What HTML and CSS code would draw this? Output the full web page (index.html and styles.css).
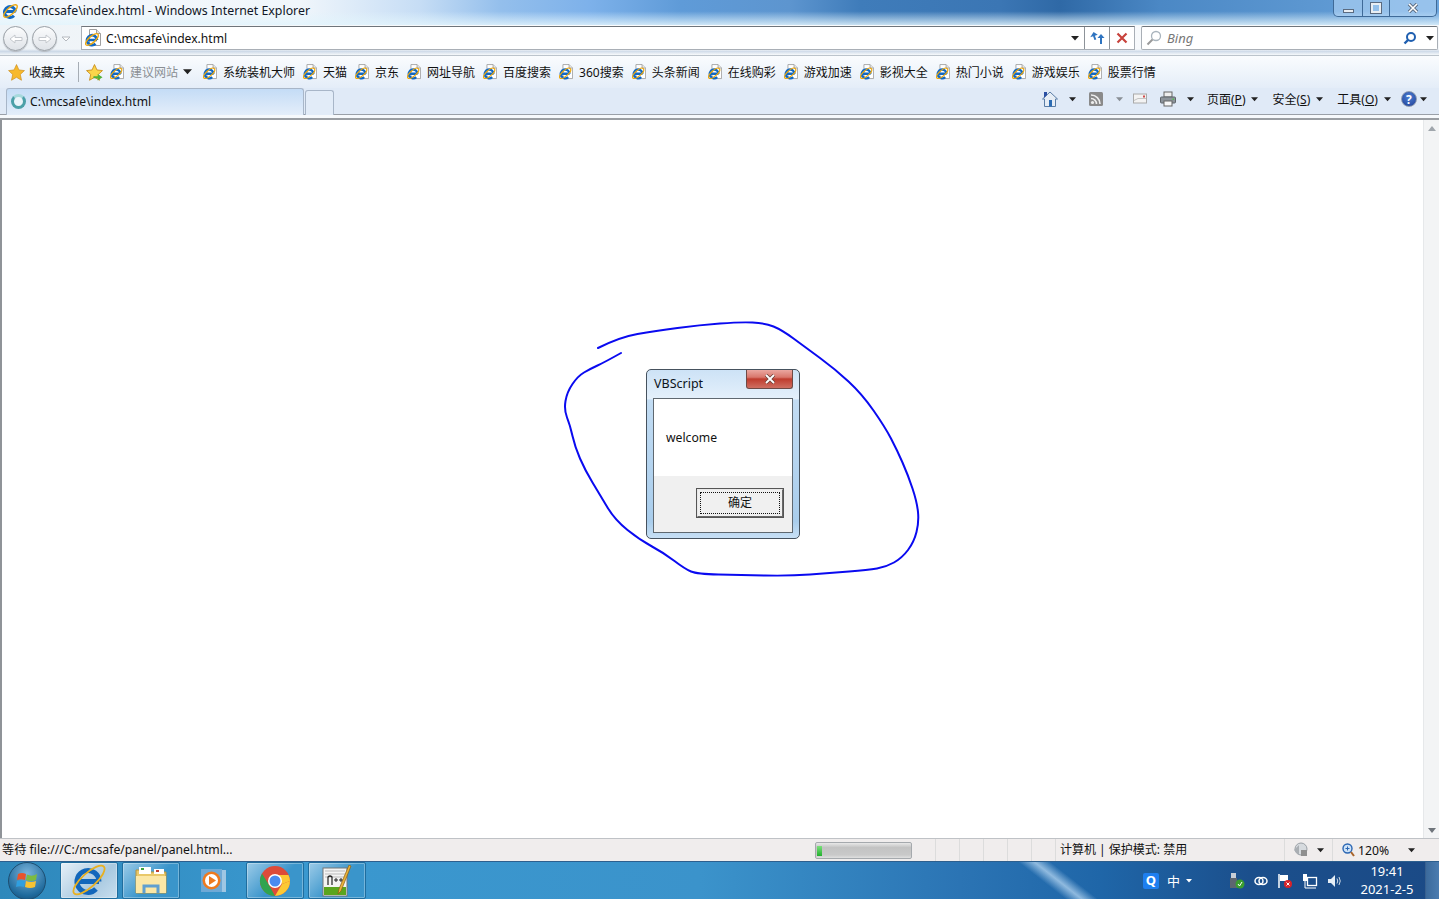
FILE: index.html
```html
<!DOCTYPE html>
<html lang="zh-CN">
<head>
    <meta charset="UTF-8">
    <title>C:\mcsafe\index.html - Windows Internet Explorer</title>
    <link rel="stylesheet" href="styles.css">
</head>
<body>
    <svg class="defs" width="0" height="0">
        <symbol id="ie-page" viewBox="0 0 16 18">
            <path d="M4.500 .5H11.500L15.500 4.500V16.500H4.500Z" fill="#fff" stroke="#a0a0a0"/>
            <path d="M11.500 .5V4.500H15.500" fill="#e4e4e4" stroke="#a0a0a0"/>
            <path d="M2.500 11H12M12 11A5 5 0 1 0 10.500 14.800" fill="none" stroke="#1068c4" stroke-width="2.700"/>
            <ellipse cx="7" cy="10.500" rx="8" ry="3.200" transform="rotate(-42 7 10.500)" fill="none" stroke="#eda80f" stroke-width="1.400"/>
        </symbol>
        <symbol id="arrow" viewBox="0 0 8 5">
            <path d="M0 0H8L4 4.500Z" fill="#222"/>
        </symbol>
    </svg>

    <div class="chrome">
        <div class="title-row">
            <svg class="title-icon" viewBox="0 0 16 16"><path d="M1.500 8.500H12.500M12.500 8.500A5.500 5.500 0 1 0 11 12.800" fill="none" stroke="#1068c4" stroke-width="3"/><ellipse cx="7.500" cy="8" rx="8.500" ry="3.400" transform="rotate(-42 7.500 8)" fill="none" stroke="#eda80f" stroke-width="1.400"/></svg>
            <span class="title-text">C:\mcsafe\index.html - Windows Internet Explorer</span>
            <div class="win-btns">
                <div class="win-btn min"><span class="min-bar"></span></div>
                <div class="win-btn max"><span class="max-box"></span></div>
                <div class="win-btn close"><svg width="12" height="10" viewBox="0 0 12 10"><path d="M2 1L10 9M10 1L2 9" stroke="#5b6b80" stroke-width="3.400"/><path d="M2 1L10 9M10 1L2 9" stroke="#fff" stroke-width="1.600"/></svg></div>
            </div>
        </div>
        <div class="nav-row">
            <div class="nav-circle"><svg width="14" height="10" viewBox="0 0 14 10"><path d="M1 5L6 1V3.500H13V6.500H6V9Z" fill="#fff" stroke="#c4c8cd"/></svg></div>
            <div class="nav-circle"><svg width="14" height="10" viewBox="0 0 14 10"><path d="M13 5L8 1V3.500H1V6.500H8V9Z" fill="#fff" stroke="#c4c8cd"/></svg></div>
            <svg class="nav-drop" width="10" height="6" viewBox="0 0 10 6"><path d="M1 1H9L5 5Z" fill="#fff" stroke="#b4b9bf"/></svg>
            <div class="address">
                <svg class="addr-icon"><use href="#ie-page"/></svg>
                <span class="addr-text">C:\mcsafe\index.html</span>
                <svg class="addr-arrow"><use href="#arrow"/></svg>
                <div class="addr-btn"><svg width="16" height="14" viewBox="0 0 16 14"><path d="M6 1L1 5H4V9H6V5H9Z" fill="#2f74c0" transform="rotate(-20 5 5)"/><path d="M11 13V7H8.500L12 3L15.500 7H13V13Z" fill="#2f74c0"/></svg></div>
                <div class="addr-btn"><svg width="12" height="12" viewBox="0 0 12 12"><path d="M1.500 1.500L10.500 10.500M10.500 1.500L1.500 10.500" stroke="#c8423c" stroke-width="2.200"/></svg></div>
            </div>
            <div class="search">
                <svg width="16" height="16" viewBox="0 0 16 16"><circle cx="10" cy="6" r="4.500" fill="#fff" stroke="#a9b4bd" stroke-width="1.300"/><path d="M6.500 9.500L1.500 14.500" stroke="#9a9a9a" stroke-width="2"/></svg>
                <span class="search-text">Bing</span>
                <svg class="search-go" width="14" height="14" viewBox="0 0 14 14"><circle cx="8" cy="6" r="4" fill="none" stroke="#1f5fb0" stroke-width="2"/><path d="M5 9L1.500 12.500" stroke="#1f5fb0" stroke-width="2.400"/></svg>
                <svg class="search-arrow"><use href="#arrow"/></svg>
            </div>
        </div>
        <div class="fav-row">
            <svg class="star" viewBox="0 0 16 16"><path d="M8 .5L10.300 5.600L15.500 6.200L11.600 9.800L12.700 15.300L8 12.500L3.300 15.300L4.400 9.800L.5 6.200L5.700 5.600Z" fill="#f7b92c" stroke="#c98a16" stroke-width=".6"/></svg>
            <span class="fav-label">收藏夹</span>
            <span class="fav-sep"></span>
            <svg class="star add" viewBox="0 0 16 16"><path d="M8 .5L10.300 5.600L15.500 6.200L11.600 9.800L12.700 15.300L8 12.500L3.300 15.300L4.400 9.800L.5 6.200L5.700 5.600Z" fill="#fbd54a" stroke="#c98a16" stroke-width=".8"/><path d="M7 11.500H11V9.500L15.500 12.500L11 15.500V13.500H7Z" fill="#53b13a"/></svg>
            <div class="fav-item"><svg class="fav-icon"><use href="#ie-page"/></svg><span class="muted">建议网站</span><svg class="fav-more"><use href="#arrow"/></svg></div>
            <div class="fav-item"><svg class="fav-icon"><use href="#ie-page"/></svg>系统装机大师</div>
            <div class="fav-item"><svg class="fav-icon"><use href="#ie-page"/></svg>天猫</div>
            <div class="fav-item"><svg class="fav-icon"><use href="#ie-page"/></svg>京东</div>
            <div class="fav-item"><svg class="fav-icon"><use href="#ie-page"/></svg>网址导航</div>
            <div class="fav-item"><svg class="fav-icon"><use href="#ie-page"/></svg>百度搜索</div>
            <div class="fav-item"><svg class="fav-icon"><use href="#ie-page"/></svg>360搜索</div>
            <div class="fav-item"><svg class="fav-icon"><use href="#ie-page"/></svg>头条新闻</div>
            <div class="fav-item"><svg class="fav-icon"><use href="#ie-page"/></svg>在线购彩</div>
            <div class="fav-item"><svg class="fav-icon"><use href="#ie-page"/></svg>游戏加速</div>
            <div class="fav-item"><svg class="fav-icon"><use href="#ie-page"/></svg>影视大全</div>
            <div class="fav-item"><svg class="fav-icon"><use href="#ie-page"/></svg>热门小说</div>
            <div class="fav-item"><svg class="fav-icon"><use href="#ie-page"/></svg>游戏娱乐</div>
            <div class="fav-item"><svg class="fav-icon"><use href="#ie-page"/></svg>股票行情</div>
        </div>
        <div class="tab-row">
            <div class="tab">
                <span class="tab-spinner"></span>
                <span>C:\mcsafe\index.html</span>
            </div>
            <div class="new-tab"></div>
            <div class="tools">
                <svg class="tool w16" viewBox="0 0 16 16"><path d="M8 1L15.500 8H13.500V15.500H2.500V8H.5Z" fill="#e6edf5" stroke="#5a7da6"/><path d="M2 1H5V4L2 7Z" fill="#2a4fa3"/><rect x="7" y="9" width="3" height="6.500" fill="#2d6cb3"/></svg>
                <svg class="t-arrow gap-home"><use href="#arrow"/></svg>
                <svg class="tool w14 gap-rss" viewBox="0 0 14 14"><rect width="14" height="14" rx="1.500" fill="#8a8a8a"/><circle cx="3.500" cy="10.500" r="1.600" fill="#eee"/><path d="M2 6.500A5.500 5.500 0 0 1 7.500 12M2 3A9 9 0 0 1 11 12" fill="none" stroke="#eee" stroke-width="1.600"/></svg>
                <svg class="t-arrow pale gap-rssa"><use href="#arrow"/></svg>
                <svg class="tool w14 gap-mail" viewBox="0 0 14 11"><rect x=".5" y=".5" width="13" height="9" fill="#f3f3f3" stroke="#aaa"/><path d="M1 7L5 5H13" fill="none" stroke="#c4c4c4"/><rect x="10" y="2" width="2" height="2" fill="#d04a4a"/></svg>
                <svg class="tool w16 gap-print" viewBox="0 0 16 16"><rect x="4" y="1" width="8" height="5" fill="#eee" stroke="#666"/><rect x=".5" y="6" width="15" height="6" rx="1" fill="#8d949b" stroke="#5f656b"/><rect x="4" y="10" width="8" height="5" fill="#f8f8f8" stroke="#666"/><rect x="12.500" y="7.500" width="1.500" height="1.500" fill="#4fbf4f"/></svg>
                <svg class="t-arrow gap-printa"><use href="#arrow"/></svg>
                <span class="tool-label first-label">页面(<u>P</u>)</span>
                <svg class="t-arrow gap-labela"><use href="#arrow"/></svg>
                <span class="tool-label gap-page">安全(<u>S</u>)</span>
                <svg class="t-arrow gap-labela"><use href="#arrow"/></svg>
                <span class="tool-label gap-page">工具(<u>O</u>)</span>
                <svg class="t-arrow gap-labela"><use href="#arrow"/></svg>
                <span class="help">?</span>
                <svg class="t-arrow gap-helpa"><use href="#arrow"/></svg>
            </div>
        </div>
    </div>

    <main class="content">
        <div class="scrollbar">
            <svg width="8" height="5" viewBox="0 0 8 5"><path d="M0 5H8L4 0Z" fill="#a0a6ac"/></svg>
            <svg width="8" height="5" viewBox="0 0 8 5"><path d="M0 0H8L4 5Z" fill="#6f757b"/></svg>
        </div>
        <svg class="scribble" width="1439" height="899" viewBox="0 0 1439 899">
            <path d="M598 348Q620 337 637.500 334Q655 331 677.500 328Q700 325 720 323.500Q740 322 752.500 322.500Q765 323 773.500 326.500Q782 330 793.500 338.500Q805 347 820 358Q835 369 848.500 381.500Q862 394 873.500 410.500Q885 427 891 438.500Q897 450 902.500 462.500Q908 475 912.500 488.500Q917 502 918 512Q919 522 916.500 532Q914 542 908 550Q902 558 894 562.500Q886 567 877 568.500Q868 570 849 571.500Q830 573 810 574.500Q790 576 765 575.500Q740 575 718.500 574.500Q697 574 691 571.500Q685 569 674.500 561Q664 553 652 546.500Q640 540 627.500 530Q615 520 607.500 507.500Q600 495 592.500 482.500Q585 470 580 458.500Q575 447 572.500 436Q570 425 567 417.500Q564 410 565.500 401Q567 392 572.500 384Q578 376 584 372.500Q590 369 597.500 365.500Q605 362 621 353" fill="none" stroke="#0a0af0" stroke-width="2" stroke-linecap="round"/>
        </svg>
        <div class="dialog">
            <div class="dialog-title">
                <span>VBScript</span>
                <div class="dialog-close"><svg width="12" height="10" viewBox="0 0 12 10"><path d="M2 1L10 9M10 1L2 9" stroke="#6b4038" stroke-width="3.400"/><path d="M2 1L10 9M10 1L2 9" stroke="#fff" stroke-width="1.800"/></svg></div>
            </div>
            <div class="dialog-body">
                <div class="dialog-msg">welcome</div>
                <div class="dialog-foot">
                    <button class="dialog-ok"><span>确定</span></button>
                </div>
            </div>
        </div>
    </main>

    <div class="status">
        <div class="st-text">等待 file:///C:/mcsafe/panel/panel.html...</div>
        <div class="progress"><span class="progress-fill"></span></div>
        <div class="st-cell"></div>
        <div class="st-cell"></div>
        <div class="st-cell"></div>
        <div class="st-cell"></div>
        <div class="st-cell"></div>
        <div class="st-cell"></div>
        <div class="st-zone">计算机 | 保护模式: 禁用</div>
        <div class="st-security">
            <svg width="16" height="16" viewBox="0 0 16 16"><circle cx="8" cy="7" r="6" fill="#d6dade" stroke="#9aa0a6"/><path d="M1 8L6 3V13Z" fill="#a9aeb3"/><rect x="8" y="8" width="6" height="6" fill="#8f8f8f"/></svg>
            <svg class="t-arrow"><use href="#arrow"/></svg>
        </div>
        <div class="st-zoom">
            <svg width="13" height="14" viewBox="0 0 13 14"><circle cx="5.500" cy="5.500" r="4.500" fill="#cfe3f7" stroke="#2a66b3" stroke-width="1.400"/><path d="M3.500 5.500H7.500M5.500 3.500V7.500" stroke="#2a66b3"/><path d="M9 9L12 13" stroke="#a8642a" stroke-width="2"/></svg>
            <span>120%</span>
            <svg class="t-arrow"><use href="#arrow"/></svg>
        </div>
    </div>

    <div class="taskbar">
        <div class="orb">
            <svg width="24" height="24" viewBox="0 0 24 24">
                <path d="M3 5Q7 3 11 5L10 11Q6 9.500 2 11Z" fill="#e8532b"/>
                <path d="M12 5.500Q17 8 22 5L21 11Q16 13 11 11Z" fill="#7cbb42"/>
                <path d="M2 12Q6 10.500 10 12L9 18Q5 16.500 1 18Z" fill="#2f9fe0"/>
                <path d="M11 12Q16 14 21 12L20 18Q15 20 10 18Z" fill="#f7c233"/>
            </svg>
        </div>
        <div class="task active">
            <svg width="38" height="34" viewBox="0 0 38 34"><path d="M7 17.500H29M29 17.500A11 11 0 1 0 26 25" fill="none" stroke="#1267bb" stroke-width="5"/><ellipse cx="19" cy="16" rx="20" ry="7" transform="rotate(-42 19 16)" fill="none" stroke="#e8b020" stroke-width="1.800"/></svg>
        </div>
        <div class="task">
            <svg width="34" height="30" viewBox="0 0 34 30"><path d="M2 4H14L16 6H32V27H2Z" fill="#e9c86a" stroke="#b8953c"/><rect x="5" y="1" width="12" height="7" fill="#fff"/><rect x="7" y="2" width="3" height="2" fill="#3da13d"/><rect x="20" y="3" width="10" height="5" fill="#fff"/><rect x="22" y="4" width="3" height="2" fill="#c2402e"/><path d="M2 10H32V27H2Z" fill="#fbe7a6"/><path d="M10 27V20H24V27" fill="none" stroke="#5f9fd0" stroke-width="3"/></svg>
        </div>
        <div class="task plain">
            <svg width="28" height="26" viewBox="0 0 28 26"><rect x="6" y="2" width="21" height="22" fill="#9fc6e3"/><rect x="2" y="1" width="21" height="23" fill="#6ea9d6"/><circle cx="12.500" cy="12.500" r="9" fill="#ee7a1f"/><circle cx="12.500" cy="12.500" r="6.500" fill="#fff"/><path d="M10 8L17 12.500L10 17Z" fill="#ee7a1f"/></svg>
        </div>
        <div class="task">
            <svg width="32" height="32" viewBox="0 0 32 32"><circle cx="16" cy="16" r="15" fill="#dd4b39"/><path d="M16 31A15 15 0 0 1 3 8.500L10 20Z" fill="#2fa44f"/><path d="M31 16A15 15 0 0 1 16 31L23 19Z" fill="#fcc934"/><path d="M16 10H29.500A15 15 0 0 1 31 16L23 19Z" fill="#fcc934"/><circle cx="16" cy="16" r="7" fill="#fff"/><circle cx="16" cy="16" r="5.500" fill="#4a8af0"/></svg>
        </div>
        <div class="task">
            <svg width="32" height="32" viewBox="0 0 32 32"><rect x="2" y="3" width="24" height="28" fill="#f4f4f4" stroke="#777"/><path d="M4 6H24M4 9H24M4 12H24" stroke="#bbb"/><path d="M3 22H25V30H3Z" fill="#5aa51e"/><path d="M7 20V12Q9 10 11 12V20" fill="none" stroke="#222" stroke-width="1.200"/><path d="M13 15H17M15 13V17M18 15H22M20 13V17" stroke="#222"/><path d="M30 1L20 26L17 29L18 24L28 0Z" fill="#e8b33a" stroke="#8a5c14" stroke-width=".7"/></svg>
        </div>
        <div class="tray">
            <div class="tray-q">Q</div>
            <span class="tray-ime">中</span>
            <svg class="tray-caret" width="6" height="4" viewBox="0 0 6 4"><path d="M0 0H6L3 3.500Z" fill="#fff"/></svg>
            <svg class="tray-usb" width="16" height="18" viewBox="0 0 16 18"><rect x="2" y="1" width="5" height="5" fill="#c7ced6"/><rect x="1" y="6" width="7" height="10" fill="#5d6670"/><circle cx="11" cy="12" r="4.500" fill="#3a9e2f"/><path d="M9 12L10.500 14L13 10" fill="none" stroke="#fff"/></svg>
            <svg width="14" height="10" viewBox="0 0 14 10"><ellipse cx="5" cy="5" rx="4" ry="3.500" fill="none" stroke="#fff" stroke-width="1.500"/><ellipse cx="9" cy="5" rx="4" ry="3.500" fill="none" stroke="#fff" stroke-width="1.500"/></svg>
            <svg width="16" height="16" viewBox="0 0 16 16"><path d="M2 1V15" stroke="#fff" stroke-width="1.500"/><path d="M3 2H11V8H3Z" fill="#fff"/><circle cx="11" cy="11" r="4" fill="#d8232a"/><path d="M9.500 9.500L12.500 12.500M12.500 9.500L9.500 12.500" stroke="#fff"/></svg>
            <svg width="16" height="16" viewBox="0 0 16 16"><rect x="1" y="1" width="4" height="7" fill="#fff"/><rect x="5.500" y="4.500" width="9" height="8" fill="none" stroke="#fff" stroke-width="1.300"/><path d="M3 8V15H14" fill="none" stroke="#fff"/></svg>
            <svg width="16" height="14" viewBox="0 0 16 14"><path d="M1 5H4L8 1V13L4 9H1Z" fill="#e6eef5"/><path d="M10 4.500Q11.500 7 10 9.500M12 3Q14.500 7 12 11" fill="none" stroke="#cfdbe6"/></svg>
            <div class="clock"><div>19:41</div><div>2021-2-5</div></div>
            <div class="show-desktop"></div>
        </div>
    </div>
</body>
</html>
```

FILE: styles.css
```css
* {
    box-sizing: border-box;
}
html, body {
    margin: 0;
    height: 100%;
}
body {
    display: flex;
    flex-direction: column;
    overflow: hidden;
    font-family: "Noto Sans", "Noto Sans CJK SC", sans-serif;
    font-size: 12px;
    color: #111;
    background: #fff;
}
.defs {
    position: absolute;
}

/* browser frame */
.chrome {
    height: 120px;
    flex: none;
    display: flex;
    flex-direction: column;
    background: #f6f9fc;
    border-bottom: 2px solid #9a9ea3;
}
.title-row {
    height: 25px;
    flex: none;
    display: flex;
    align-items: center;
    padding-left: 3px;
    background:
        linear-gradient(180deg, rgba(255, 255, 255, 0) 45%, rgba(226, 244, 252, .85) 100%),
        linear-gradient(90deg, #f4f8fc 0, #f0f6fb 300px, #c6ddf5 420px, #94bfec 500px, #7db1ea 590px, #5f9bd8 680px, #5d95cf 790px, #3f7cba 860px, #3b76b4 1000px, #2f69a6 1060px, #4b88c5 1160px, #5b96d0 1300px, #6aa4dd 1439px);
}
.title-icon {
    width: 16px;
    height: 16px;
    margin-right: 2px;
    margin-bottom: 4px;
}
.title-text {
    font-size: 12.350px;
    color: #101828;
    white-space: nowrap;
    margin-bottom: 5px;
}
.win-btns {
    display: flex;
    margin-left: auto;
    margin-right: 2px;
    margin-top: -8px;
    height: 17px;
    border: 1px solid #3f6a98;
    border-top: 0;
    border-radius: 0 0 5px 5px;
    background: rgba(190, 220, 250, .55);
}
.win-btn {
    height: 16px;
    display: flex;
    align-items: center;
    justify-content: center;
    border-right: 1px solid #3f6a98;
}
.win-btn.min {
    width: 29px;
}
.win-btn.max {
    width: 27px;
}
.win-btn.close {
    width: 46px;
    border-right: 0;
}
.min-bar {
    width: 11px;
    height: 4px;
    margin-top: 5px;
    background: #e9eef3;
    border: 1px solid #5b6b80;
}
.max-box {
    width: 10px;
    height: 10px;
    border: 2px solid #e9eef3;
    outline: 1px solid #5b6b80;
}

.nav-row {
    height: 31px;
    flex: none;
    display: flex;
    align-items: flex-start;
    padding: 1px 0 0 3px;
    border-bottom: 1px solid #bcc4cc;
    background:
        linear-gradient(180deg, rgba(255, 255, 255, 0) 80%, rgba(170, 190, 215, .5) 88%, rgba(245, 248, 250, .4) 100%),
        linear-gradient(90deg, #eef3f7, #fbfcfd 600px, #f5f8fb 1439px);
}
.nav-circle {
    width: 25px;
    height: 25px;
    margin-right: 4px;
    display: flex;
    align-items: center;
    justify-content: center;
    border-radius: 50%;
    border: 1px solid #9aa0a6;
    background: linear-gradient(180deg, #fbfcfd, #dfe3e8);
    box-shadow: 0 1px 1px #b5bac0;
}
.nav-drop {
    margin: 10px 10px 0 0;
}
.address {
    width: 1054px;
    height: 24px;
    flex: none;
    display: flex;
    align-items: center;
    padding-left: 3px;
    background: #fff;
    border: 1px solid #a9afb6;
    border-top-color: #6f757b;
}
.addr-icon {
    width: 16px;
    height: 18px;
}
.addr-text {
    margin-left: 5px;
    font-size: 12.100px;
}
.addr-arrow {
    width: 8px;
    height: 5px;
    margin-left: auto;
    margin-right: 5px;
}
.addr-btn {
    width: 25px;
    height: 22px;
    display: flex;
    align-items: center;
    justify-content: center;
    border-left: 1px solid #8d9399;
}
.search {
    width: 297px;
    height: 24px;
    flex: none;
    margin-left: 6px;
    display: flex;
    align-items: center;
    padding-left: 4px;
    background: #fff;
    border: 1px solid #a9afb6;
    border-top-color: #6f757b;
    border-radius: 2px;
}
.search-text {
    margin-left: 5px;
    color: #777;
    font-style: italic;
    font-size: 13px;
}
.search-go {
    margin-left: auto;
}
.search-arrow {
    width: 8px;
    height: 5px;
    margin: 0 3px 0 9px;
}

.fav-row {
    height: 32px;
    flex: none;
    display: flex;
    align-items: center;
    padding-left: 8px;
    background: linear-gradient(180deg, #fafcfe, #e4edf8);
    white-space: nowrap;
}
.star {
    width: 17px;
    height: 17px;
}
.fav-label {
    margin-left: 4px;
    width: 36px;
}
.fav-sep {
    width: 1px;
    height: 20px;
    margin: 0 7px 0 13px;
    background: #a6adb5;
}
.star.add {
    margin-right: 7px;
}
.fav-item {
    display: flex;
    align-items: center;
    margin-right: 8px;
}
.fav-icon {
    width: 14px;
    height: 16px;
    margin-right: 6px;
}
.muted {
    color: #8a8f94;
}
.fav-more {
    width: 9px;
    height: 6px;
    margin: 0 3px 0 5px;
}

.tab-row {
    height: 27px;
    flex: none;
    display: flex;
    align-items: flex-end;
    padding-left: 6px;
    background: #e0eaf7;
    border-bottom: 1px solid #9aa0a8;
}
.tab {
    width: 298px;
    height: 27px;
    margin-bottom: -1px;
    display: flex;
    align-items: center;
    padding: 0 0 2px 4px;
    border: 1px solid #a8b6c8;
    border-bottom: 0;
    border-radius: 3px 3px 0 0;
    background: linear-gradient(180deg, #c4dcf6, #e4eefa);
    font-size: 12.100px;
}
.tab-spinner {
    width: 15px;
    height: 15px;
    margin-right: 4px;
    border: 3px solid #4ba0a8;
    border-top-color: #a6d9dc;
    border-radius: 50%;
    background: #eaf4fa;
}
.new-tab {
    width: 29px;
    height: 25px;
    margin-left: 1px;
    margin-bottom: -1px;
    border: 1px solid #a8b6c8;
    border-bottom: 0;
    border-radius: 3px 3px 0 0;
    background: #e2ecf8;
}
.tools {
    margin-left: 708px;
    height: 24px;
    margin-bottom: 3px;
    display: flex;
    align-items: center;
}
.w16 {
    width: 16px;
    height: 16px;
}
.w14 {
    width: 14px;
    height: 14px;
}
.t-arrow {
    width: 7px;
    height: 5px;
    flex: none;
}
.t-arrow.pale {
    opacity: .45;
}
.gap-home {
    margin-left: 11px;
}
.gap-rss {
    margin-left: 13px;
}
.gap-rssa {
    margin-left: 13px;
}
.gap-mail {
    margin-left: 10px;
}
.gap-print {
    margin-left: 13px;
}
.gap-printa {
    margin-left: 11px;
}
.tool-label {
    white-space: nowrap;
}
.first-label {
    margin-left: 13px;
}
.gap-page {
    margin-left: 14px;
}
.gap-labela {
    margin-left: 6px;
}
.help {
    width: 16px;
    height: 16px;
    margin-left: 10px;
    border-radius: 50%;
    text-align: center;
    font-weight: 700;
    line-height: 15px;
    color: #fff;
    background: radial-gradient(circle at 50% 35%, #4d7fd4, #1f3f95);
    border: 1px solid #8f9bb0;
}
.gap-helpa {
    margin-left: 3px;
}

/* page area */
.content {
    flex: 1;
    position: relative;
    border-left: 2px solid #8f9398;
    background: #fff;
}
.scrollbar {
    position: absolute;
    top: 0;
    bottom: 0;
    right: 0;
    width: 16px;
    display: flex;
    flex-direction: column;
    align-items: center;
    justify-content: space-between;
    padding: 6px 0 5px;
    background: #f3f4f5;
    border-left: 1px solid #e6e8ea;
}
.scribble {
    position: absolute;
    left: -2px;
    top: -120px;
}
.dialog {
    position: absolute;
    left: 644px;
    top: 249px;
    width: 154px;
    height: 170px;
    padding: 0 6px 5px;
    display: flex;
    flex-direction: column;
    border: 1px solid #46525e;
    border-radius: 5px;
    background: linear-gradient(180deg, #cde2f6, #e4f0fb 17%, #c2dcf3 18%, #a9cdec 90%, #c8e0f5);
}
.dialog-title {
    height: 28px;
    flex: none;
    display: flex;
    align-items: center;
    padding: 0 0 2px 1px;
    font-size: 12.500px;
    color: #0c1420;
}
.dialog-close {
    position: absolute;
    top: 0;
    right: 6px;
    width: 47px;
    height: 19px;
    display: flex;
    align-items: center;
    justify-content: center;
    border: 1px solid #6e4a46;
    border-top: 0;
    border-radius: 0 0 3px 3px;
    background: linear-gradient(180deg, #eba7a0, #d9776c 40%, #bf3c2e 50%, #cf6f62);
}
.dialog-body {
    flex: 1;
    display: flex;
    flex-direction: column;
    border: 1px solid #5f6870;
    background: #fff;
}
.dialog-msg {
    height: 77px;
    padding: 30px 0 0 12px;
    font-size: 12.200px;
    line-height: 18px;
}
.dialog-foot {
    flex: 1;
    display: flex;
    justify-content: flex-end;
    align-items: flex-start;
    padding: 12px 8px 0 0;
    background: #f0f0f0;
}
.dialog-ok {
    width: 88px;
    height: 30px;
    padding: 2px;
    font: inherit;
    color: #111;
    background: #f0f0f0;
    border: 2px solid;
    border-color: #e8e8e8 #696969 #696969 #e8e8e8;
    outline: 1px solid #555;
    outline-offset: -1px;
}
.dialog-ok span {
    display: block;
    height: 100%;
    line-height: 20px;
    border: 1px dotted #111;
}

/* status bar */
.status {
    height: 23px;
    flex: none;
    display: flex;
    align-items: center;
    background: #f0eded;
    border-top: 1px solid #bfc2c6;
    white-space: nowrap;
    font-size: 12.200px;
}
.st-text {
    width: 815px;
    padding: 0 0 3px 2px;
}
.progress {
    width: 97px;
    height: 17px;
    border: 1px solid #a5a9ad;
    border-radius: 2px;
    background: linear-gradient(180deg, #e8e8e8, #c3c3c3 30%, #c9c9c9 80%, #e0e0e0);
    padding: 3px 0 0 1px;
}
.progress-fill {
    display: block;
    width: 5px;
    height: 10px;
    background: linear-gradient(180deg, #7be07b, #22b02e);
}
.st-cell {
    width: 24px;
    height: 100%;
    border-right: 1px solid #dcdcdc;
    flex: none;
}
.st-cell:first-of-type {
    width: 25px;
}
.st-zone {
    width: 229px;
    height: 100%;
    padding-left: 4px;
    line-height: 21px;
    font-size: 12px;
    border-right: 1px solid #dcdcdc;
}
.st-security {
    width: 48px;
    height: 100%;
    display: flex;
    align-items: center;
    padding-left: 8px;
    gap: 8px;
    border-right: 1px solid #dcdcdc;
}
.st-zoom {
    flex: 1;
    display: flex;
    align-items: center;
    padding-left: 9px;
}
.st-zoom span {
    margin-left: 3px;
    width: 50px;
}

/* taskbar */
.taskbar {
    height: 38px;
    flex: none;
    display: flex;
    align-items: stretch;
    padding-left: 60px;
    position: relative;
    border-top: 1px solid #2d5f8e;
    background:
        linear-gradient(38deg, rgba(255, 255, 255, 0) 656px, rgba(190, 220, 245, .7) 666px, rgba(255, 255, 255, 0) 676px),
        linear-gradient(90deg, #2e88bb 0, #3a98cf 300px, #3b93cb 700px, #2b74b4 960px, #1f66a8 1100px, #1b4f8c 1250px, #1b4a86 1439px);
}
.orb {
    position: absolute;
    left: 8px;
    top: 0;
    width: 38px;
    height: 38px;
    display: flex;
    align-items: center;
    justify-content: center;
    border-radius: 50%;
    border: 1px solid #1d4d70;
    background: radial-gradient(circle at 50% 30%, #7ab4dc, #1f6a9c 70%, #16486e);
}
.task {
    width: 58px;
    margin-right: 4px;
    display: flex;
    align-items: center;
    justify-content: center;
    border: 1px solid #1f6d9e;
    border-radius: 2px;
    background: linear-gradient(135deg, #9ccbe8, #3a95cb 55%);
    box-shadow: inset 0 0 0 1px rgba(255, 255, 255, .3);
}
.task.active {
    background: linear-gradient(135deg, #e6f0f8, #a9c9e0 60%, #c8dfef);
}
.task.plain {
    background: none;
    border-color: transparent;
    box-shadow: none;
}
.tray {
    margin-left: auto;
    display: flex;
    align-items: center;
    color: #fff;
}
.tray-q {
    width: 16px;
    height: 16px;
    border-radius: 2px;
    background: #1e7ff0;
    font-size: 13px;
    font-weight: 700;
    line-height: 15px;
    text-align: center;
}
.tray-ime {
    margin-left: 8px;
    font-size: 13px;
}
.tray-caret {
    margin: 0 28px 0 6px;
}
.tray svg + svg {
    margin-left: 9px;
}
.tray-caret + svg {
    margin-left: 0;
}
.clock {
    width: 76px;
    margin-left: 6px;
    padding-bottom: 2px;
    text-align: center;
    line-height: 18px;
    font-size: 13px;
}
.show-desktop {
    width: 14px;
    align-self: stretch;
    border-left: 1px solid #38608f;
    background: linear-gradient(90deg, #3b6a9c, #4b7cb0);
}
```
